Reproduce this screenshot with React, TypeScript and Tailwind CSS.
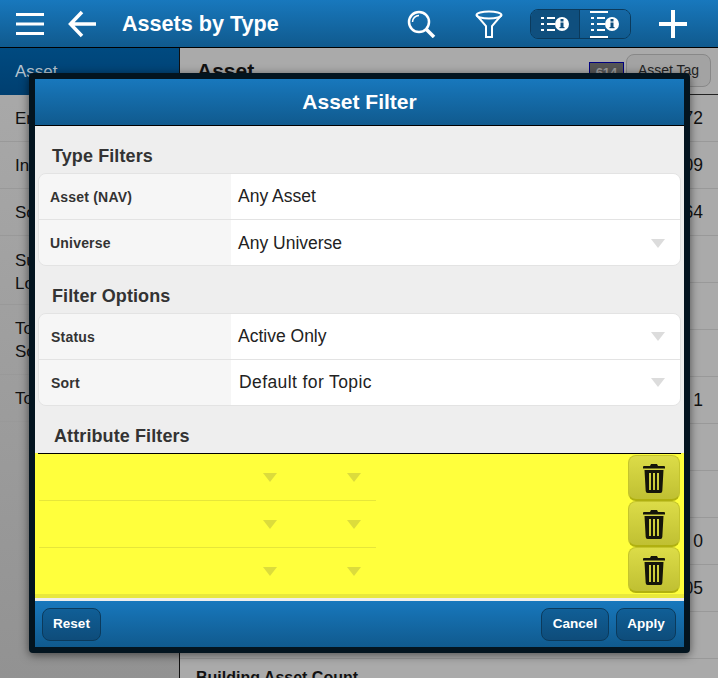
const leftRows = [
  { label: "Asset", selected: true, h: "h-[47px]" },
  { label: "Er", h: "h-[47px]" },
  { label: "In", h: "h-[47px]" },
  { label: "So", h: "h-[47px]" },
  { label: "Su", second: "Lo", h: "h-[69px] pt-[3px]" },
  { label: "To", second: "So", h: "h-[70px]" },
  { label: "To", h: "h-[47px]" },
];

const rightRows = ["72", "09", "64", "", "", "", "1", "", "", "0", "05", ""];

const HeaderBlue = "bg-gradient-to-b from-[#1878bd] to-[#105a8e]";

const ListInfoIcon = ({ tall }: { tall?: boolean }) => {
  const cy = 15;
  const rows = [9, 15, 21];
  return (
    <svg width="30" height="30" viewBox="0 0 30 30" fill="#fff">
      {tall && <rect x="0" y="2" width="18" height="2" />}
      {tall && <rect x="0" y="27" width="18" height="2" />}
      {rows.map((y) => (
        <g key={y}>
          <rect x="1" y={y - 1} width="3" height="2" />
          <rect x="7" y={y - 1} width="8" height="2" />
        </g>
      ))}
      <circle cx="22" cy={cy} r="7" />
      <rect x="20.5" y={cy - 5} width="3" height="2.5" fill="#0f4f7e" />
      <rect x="20.5" y={cy - 1.5} width="3" height="5.5" fill="#0f4f7e" />
      <rect x="19.5" y={cy + 3} width="5" height="1.2" fill="#0f4f7e" />
    </svg>
  );
};

const Trash = () => (
  <svg className="mt-[2px]" width="22" height="29" viewBox="0 0 22 29" fill="#15150a">
    <path d="M8 0h6l1 2h6a1 1 0 0 1 1 1v1.500H0V3a1 1 0 0 1 1-1h6z" />
    <path fillRule="evenodd" d="M1.500 6h19l-1.200 21a2 2 0 0 1-2 2H4.700a2 2 0 0 1-2-2zM6 9v17h2V9zM10 9v17h2V9zM14 9v17h2V9z" />
  </svg>
);

const Arrow = () => <div className="w-0 h-0 border-x-[7px] border-x-transparent border-t-[9px] border-t-[#dcdcdc]" />;

const FormRow = ({ label, value, arrow, top, labelX, valueX }: { label: string; value: string; arrow?: boolean; top?: boolean; labelX: string; valueX: string }) => (
  <div className={`flex ${top ? "h-[45px]" : "h-[46px] border-t border-[#e3e3e3]"}`}>
    <div className={`w-[192px] bg-[#f6f6f6] flex items-center pt-[2px] text-[14px] tracking-[0.2px] font-bold text-[#333] ${labelX}`}>{label}</div>
    <div className={`flex-1 bg-white flex items-center justify-between pr-[15px] text-[17.5px] text-[#222] ${valueX}`}>
      <span>{value}</span>
      {arrow && <Arrow />}
    </div>
  </div>
);

const AttributeRow = ({ line }: { line?: boolean }) => (
  <div className={`h-[47px] flex pt-[19px] pl-[224px] gap-[70px] ${line ? "border-b border-[#e6e63a]" : ""}`}>
    <div className="w-0 h-0 border-x-[7px] border-x-transparent border-t-[9px] border-t-[#dcdc3c]" />
    <div className="w-0 h-0 border-x-[7px] border-x-transparent border-t-[9px] border-t-[#dcdc3c]" />
  </div>
);

const FooterButton = ({ label, w }: { label: string; w: string }) => (
  <button className={`${w} h-[33px] rounded-[8px] border border-[#0b3a5c] bg-gradient-to-b from-[#105f97] to-[#0e4c7a] text-white text-[13.500px] font-bold`}>
    {label}
  </button>
);

export default function App() {
  return (
    <div className="relative w-[718px] h-[678px] overflow-hidden bg-[#aaaaaa] font-['Liberation_Sans',Arial,sans-serif]">
      <header className={`flex items-center h-[48px] border-b border-black ${HeaderBlue}`}>
        <svg className="ml-[16px]" width="28" height="22" viewBox="0 0 28 22" fill="#fff">
          <rect y="0" width="28" height="3" />
          <rect y="9.500" width="28" height="3" />
          <rect y="19" width="28" height="3" />
        </svg>
        <svg className="ml-[24px]" width="28" height="28" viewBox="0 0 28 28" fill="none" stroke="#fff" strokeWidth="3.500">
          <path d="M28 14H3M14 2 2.500 14 14 26" />
        </svg>
        <div className="ml-[26px] pt-[2px] text-white font-bold text-[21.600px]">Assets by Type</div>
        <svg className="ml-[128px]" width="30" height="28" viewBox="0 0 30 28" fill="none" stroke="#fff">
          <circle cx="12" cy="12" r="10" strokeWidth="2.500" />
          <path d="M5.500 12a6.500 6.500 0 0 1 6.500-6.500" strokeWidth="1.500" />
          <path d="M19 19l8 8" strokeWidth="3.500" />
        </svg>
        <svg className="ml-[38px]" width="28" height="28" viewBox="0 0 28 28" fill="none" stroke="#fff" strokeWidth="2">
          <ellipse cx="14" cy="5" rx="12.500" ry="3.500" />
          <path d="M1.500 5 11 16v11h6V16L26.500 5" />
        </svg>
        <div className="ml-[27px] flex w-[101px] h-[30px] rounded-[8px] border border-[#0b3a5c] overflow-hidden">
          <div className="w-1/2 bg-[#0f4f7e] border-r border-[#0b3a5c] flex items-center justify-center">
            <ListInfoIcon />
          </div>
          <div className="w-1/2 bg-gradient-to-b from-[#1669a6] to-[#105a8e] flex items-center justify-center">
            <ListInfoIcon tall />
          </div>
        </div>
        <svg className="ml-[28px]" width="28" height="28" viewBox="0 0 28 28" fill="#fff">
          <rect x="12" width="4" height="28" />
          <rect y="12" width="28" height="4" />
        </svg>
      </header>

      <div className="flex h-[630px]">
        <aside className="w-[180px] shrink-0 border-r border-[#111] bg-gradient-to-b from-[#aaaaaa] to-[#929292]">
          {leftRows.map((row, i) => (
            <div
              key={i}
              className={`${row.h} pl-[15px] flex flex-col justify-center text-[17px] leading-[23px] ${row.selected ? "bg-gradient-to-b from-[#004a80] to-[#003f70] text-[#b5c3cf]" : "border-b border-[#999] text-[#111]"}`}
            >
              <span>{row.label}</span>
              {row.second && <span>{row.second}</span>}
            </div>
          ))}
        </aside>
        <main className="flex-1">
          <div className="h-[47px] border-b border-[#222] flex items-start pl-[17px] pr-[7px] pt-[6px]">
            <span className="text-[21px] font-bold text-[#111] mt-[1px]">Asset</span>
            <span className="ml-auto mt-[8px] h-[20px] w-[35px] bg-[#555] border border-[#000080] text-[#999] text-[13px] font-bold text-center">614</span>
            <button className="ml-[2px] w-[85px] h-[33px] rounded-[8px] border border-[#888] bg-[#a3a3a3] text-[14px] text-[#222]">Asset Tag</button>
          </div>
          {rightRows.map((v, i) => (
            <div key={i} className="h-[47px] border-b border-[#999] flex items-center justify-end pr-[15px] text-[17.500px] text-[#111]">
              {v}
            </div>
          ))}
          <div className="pl-[16px] pt-[7px] text-[16px] font-bold text-[#111]">Building Asset Count</div>
        </main>
      </div>

      <section className="absolute left-[29px] top-[73px] w-[661px] h-[580px] border-[6px] border-[#03141f] rounded-[4px] shadow-[0_2px_10px_rgba(0,0,0,0.55)] flex flex-col bg-[#eeeeee]">
        <div className={`h-[47px] shrink-0 border-b border-black flex items-center justify-center text-white font-bold text-[21px] ${HeaderBlue}`}>
          Asset Filter
        </div>
        <div className="flex-1 flex flex-col">
          <h3 className="mt-[20px] ml-[17px] text-[18px] tracking-[0.1px] leading-[20px] font-bold text-[#333]">Type Filters</h3>
          <div className="mt-[7px] mx-[3px] rounded-[8px] border border-[#e3e3e3] overflow-hidden">
            <FormRow top label="Asset (NAV)" value="Any Asset" labelX="pl-[11px]" valueX="pl-[7px]" />
            <FormRow arrow label="Universe" value="Any Universe" labelX="pl-[11px]" valueX="pl-[7px] pt-[2px]" />
          </div>
          <h3 className="mt-[20px] ml-[17px] text-[18px] tracking-[0.1px] leading-[20px] font-bold text-[#333]">Filter Options</h3>
          <div className="mt-[7px] mx-[3px] rounded-[8px] border border-[#e3e3e3] overflow-hidden">
            <FormRow top arrow label="Status" value="Active Only" labelX="pl-[12px]" valueX="pl-[7px]" />
            <FormRow arrow label="Sort" value="Default for Topic" labelX="pl-[12px]" valueX="pl-[8px] tracking-[0.4px]" />
          </div>
          <h3 className="mt-[20px] ml-[19px] text-[18px] tracking-[0.1px] leading-[20px] font-bold text-[#333]">Attribute Filters</h3>
          <div className="mt-[7px] h-[145px] bg-[#ffff3c] border-b-[4px] border-[#e8e83c] px-[3px]">
            <div className="h-full border-t border-black flex justify-between">
              <div className="ml-[1px] w-[337px]">
                <AttributeRow line />
                <AttributeRow line />
                <AttributeRow />
              </div>
              <div className="mr-[1px] flex flex-col pt-[1px]">
                {[0, 1, 2].map((i) => (
                  <div key={i} className="w-[52px] h-[46px] rounded-[8px] border border-[#c4c42c] border-b-[2px] border-b-[#b0b010] bg-gradient-to-b from-[#dcdc48] to-[#c0c032] flex items-center justify-center">
                    <Trash />
                  </div>
                ))}
              </div>
            </div>
          </div>
        </div>
        <div className={`h-[46px] shrink-0 flex items-center justify-between pl-[7px] pr-[8px] ${HeaderBlue}`}>
          <FooterButton label="Reset" w="w-[59px]" />
          <div className="flex gap-[7px]">
            <FooterButton label="Cancel" w="w-[68px]" />
            <FooterButton label="Apply" w="w-[60px]" />
          </div>
        </div>
      </section>
    </div>
  );
}
